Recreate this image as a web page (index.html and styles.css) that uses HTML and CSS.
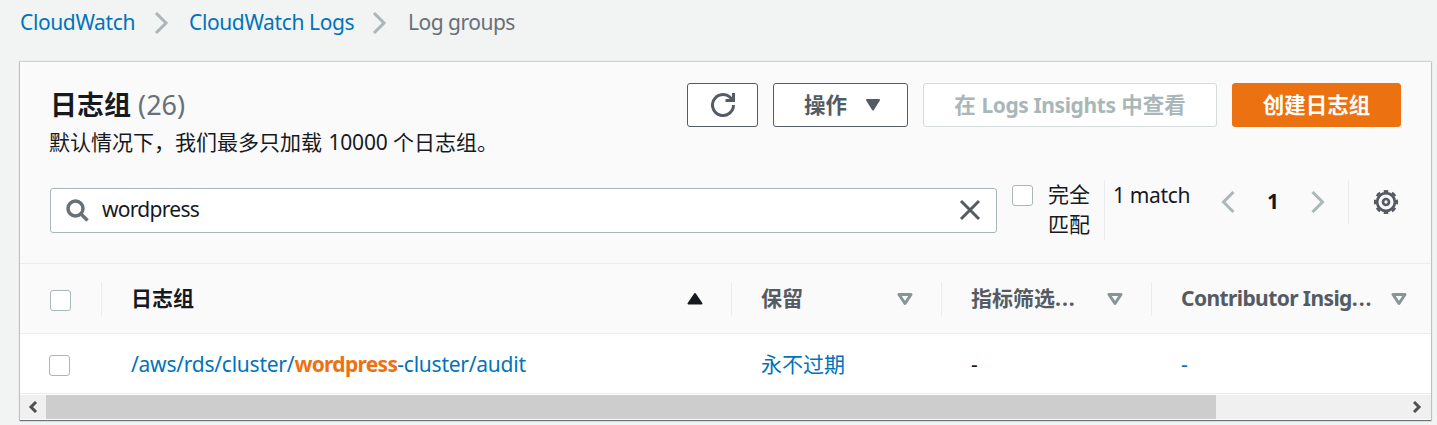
FILE: index.html
```html
<!DOCTYPE html>
<html lang="zh-CN">
<head>
<meta charset="utf-8">
<title>CloudWatch Logs</title>
<link rel="stylesheet" href="styles.css">
</head>
<body>
<nav class="crumbs">
  <a class="crumb crumb-root">CloudWatch</a>
  <svg class="crumb-sep" width="16" height="24" viewBox="0 0 16 24"><path d="M2 2l10 10L2 22"/></svg>
  <a class="crumb crumb-logs">CloudWatch Logs</a>
  <svg class="crumb-sep" width="16" height="24" viewBox="0 0 16 24"><path d="M2 2l10 10L2 22"/></svg>
  <span class="crumb current">Log groups</span>
</nav>
<main class="panel">
  <header class="panel-head">
    <div class="title-row">
      <div class="titles">
        <h1>日志组 <span class="count">(26)</span></h1>
        <p>默认情况下，我们最多只加载 <span class="num">10000</span> 个日志组。</p>
      </div>
      <div class="actions">
        <button class="btn refresh"><svg width="26" height="26" viewBox="0 0 26 26"><path d="M23.5 13A10.5 10.5 0 1 1 20 5.2L22.5 8"/><path d="M23.5 1v7.5h-8"/></svg></button>
        <button class="btn menu">操作<svg width="16" height="14" viewBox="0 0 16 14"><path d="M2 2h12L8 11.5z"/></svg></button>
        <button class="btn disabled">在 <span class="latin">Logs Insights</span> 中查看</button>
        <button class="btn primary">创建日志组</button>
      </div>
    </div>
    <div class="tools">
      <div class="search">
        <svg class="glass" width="24" height="24" viewBox="0 0 24 24"><circle cx="9.5" cy="9.5" r="7.5"/><path d="M14.8 14.8l6.7 6.7"/></svg>
        <span class="query">wordpress</span>
        <svg class="clear" width="22" height="22" viewBox="0 0 22 22"><path d="M2 2l18 18M20 2L2 20"/></svg>
      </div>
      <label class="exact"><span class="box"></span><span class="exact-text">完全匹配</span></label>
      <div class="matches">1 match</div>
      <div class="pager">
        <svg width="16" height="24" viewBox="0 0 16 24"><path d="M13.5 2l-10 10 10 10"/></svg>
        <b>1</b>
        <svg width="16" height="24" viewBox="0 0 16 24"><path d="M2.5 2l10 10-10 10"/></svg>
      </div>
      <div class="settings">
        <svg width="26" height="26" viewBox="0 0 26 26"><circle cx="13" cy="13" r="8.9"/><circle class="teeth" cx="13" cy="13" r="10.9" pathLength="80"/><circle cx="13" cy="13" r="3"/></svg>
      </div>
    </div>
  </header>
  <div class="row thead">
    <div class="cell check"><span class="box"></span></div>
    <div class="cell sorted"><span class="label">日志组</span><svg class="sort-up" width="18" height="14" viewBox="0 0 18 14"><path d="M2.5 11.5h13L9 2z"/></svg></div>
    <div class="cell"><span class="label">保留</span><svg class="sort" width="16" height="14" viewBox="0 0 16 14"><path d="M2 2.5h12L8 11.5z"/></svg></div>
    <div class="cell"><span class="label">指标筛选<span class="dots">...</span></span><svg class="sort" width="16" height="14" viewBox="0 0 16 14"><path d="M2 2.5h12L8 11.5z"/></svg></div>
    <div class="cell last"><span class="label contrib">Contributor Insig<span class="dots">...</span></span><svg class="sort" width="16" height="14" viewBox="0 0 16 14"><path d="M2 2.5h12L8 11.5z"/></svg></div>
  </div>
  <div class="row tbody">
    <div class="cell check"><span class="box"></span></div>
    <div class="cell"><a class="group">/aws/rds/cluster/<b>wordpress</b>-cluster/audit</a></div>
    <div class="cell"><a>永不过期</a></div>
    <div class="cell">-</div>
    <div class="cell last"><a>-</a></div>
  </div>
  <div class="scrollbar">
    <span class="arrow"><svg width="10" height="12" viewBox="0 0 10 12"><path d="M8 1L3 6l5 5"/></svg></span>
    <span class="thumb"></span>
    <span class="track"></span>
    <span class="arrow"><svg width="10" height="12" viewBox="0 0 10 12"><path d="M1 1l5 5-5 5"/></svg></span>
  </div>
</main>
</body>
</html>
```
FILE: styles.css
```css
* { box-sizing: border-box; }
body {
  margin: 0;
  height: 425px;
  overflow: hidden;
  background: #f2f3f3;
  color: #16191f;
  font: 21px/30px "Noto Sans", "Noto Sans CJK SC", sans-serif;
}
svg { display: block; flex: none; fill: none; }
a { color: #0073bb; }

.crumbs { display: flex; align-items: center; height: 62px; padding: 0 0 16px 20px; }
.crumb { margin-top: -2px; letter-spacing: -.38px; white-space: nowrap; }
.crumb-root { width: 134px; }
.crumb-logs { width: 183px; }
.crumb.current { margin-left: 1px; color: #687078; letter-spacing: -.5px; }
.crumb-sep { margin-right: 19px; stroke: #aab7b8; stroke-width: 3; }
.crumb-root, .crumb-logs { flex: none; }

.panel {
  width: 1411px;
  height: 358px;
  margin-left: 20px;
  background: #fff;
  box-shadow: 0 1px 1px rgba(0, 28, 36, .5), 0 0 1px 1px rgba(0, 28, 36, .15);
}
.panel-head { height: 202px; padding: 21px 30px 0; background: #fafafa; border-bottom: 1px solid #eaeded; }
.title-row { display: flex; justify-content: space-between; height: 97px; }
.titles { white-space: nowrap; }
h1 { margin: 3px 0 3px; font-size: 27px; line-height: 38px; font-weight: 700; }
.count { font-weight: 400; color: #687078; }
p { margin: 0 0 0 -1px; }
.num { margin-left: 1px; letter-spacing: -.2px; }
.actions { display: flex; gap: 15px; }
.btn {
  display: flex;
  align-items: center;
  justify-content: center;
  height: 44px;
  padding: 0 0 1px;
  border: 1px solid #545b64;
  border-radius: 3px;
  background: #fff;
  color: #545b64;
  font: inherit;
  font-size: 21.5px;
  font-weight: 700;
  white-space: pre;
}
.refresh { width: 71px; padding: 0; }
.refresh svg { stroke: #545b64; stroke-width: 3; }
.menu { width: 135px; gap: 18px; padding-left: 4px; }
.menu svg { margin-top: 1px; fill: #545b64; stroke: #545b64; stroke-width: 2; stroke-linejoin: round; }
.disabled { width: 294px; border-color: #d5dbdb; color: #aab7b8; }
.latin { font-size: 21px; letter-spacing: -.4px; }
.primary { width: 169px; border-color: #ec7211; background: #ec7211; color: #fff; }

.tools { display: flex; align-items: flex-start; }
.search {
  display: flex;
  align-items: center;
  width: 947px;
  height: 45px;
  margin-top: 8px;
  padding: 0 15px 2px;
  border: 1px solid #aab7b8;
  border-radius: 3px;
  background: #fff;
}
.glass { margin-top: 2px; stroke: #687078; stroke-width: 3.5; }
.query { flex: 1; margin: -1px 0 0 12px; letter-spacing: -.7px; }
.clear { stroke: #545b64; stroke-width: 3; }
.box { display: block; flex: none; width: 21px; height: 21px; border: 1.5px solid #aab7b8; border-radius: 3px; background: #fff; }
.exact { display: flex; margin-left: 15px; }
.exact .box { margin-top: 5px; }
.exact-text { width: 42px; margin: -1px 0 0 15px; }
.matches { width: 98px; height: 60px; margin-left: 14px; padding-left: 8px; border-left: 1px solid #eaeded; letter-spacing: -.35px; white-space: nowrap; }
.pager { display: flex; align-items: center; justify-content: space-between; width: 106px; height: 44px; margin-left: 18px; }
.pager svg { stroke: #aab7b8; stroke-width: 3; }
.pager b { margin-top: -2px; }
.settings { display: flex; align-items: center; justify-content: flex-end; width: 51px; height: 44px; margin-left: 22px; border-left: 1px solid #eaeded; }
.settings svg { stroke: #545b64; stroke-width: 2.7; }
.settings .teeth { stroke-width: 2.4; stroke-dasharray: 5.4 4.6; stroke-dashoffset: 2.7; }

.row { display: grid; grid-template-columns: 82px 630px 210px 210px 279px; }
.cell { display: flex; align-items: center; justify-content: space-between; padding: 0 28px 0 29px; white-space: nowrap; }
.thead { height: 70px; padding: 18px 0; border-bottom: 1px solid #eaeded; background: #fafafa; color: #545b64; font-weight: 700; }
.thead .cell { height: 34px; border-right: 1px solid #eaeded; }
.thead .sorted { padding-right: 27px; color: #16191f; }
.thead .last { padding-right: 24px; border: 0; }
.cell.check { padding: 0 0 0 30px; }
.label { margin-top: -2px; }
.dots { letter-spacing: 1px; }
.thead .box { margin-top: 2px; }
.sort { stroke: #879596; stroke-width: 3; stroke-linejoin: round; }
.sort-up { fill: #16191f; stroke: #16191f; stroke-width: 2; stroke-linejoin: round; }
.contrib { letter-spacing: -.6px; }
.tbody { height: 60px; border-bottom: 1px solid #eaeded; }
.tbody .box { margin: 3px 0 0 -1px; }
.group { letter-spacing: -.24px; }
.group b { color: #ec7211; letter-spacing: -.7px; }

.scrollbar { display: flex; height: 25px; margin-top: 1px; border-bottom: 1px solid #fafafa; background: #f0f0f0; }
.arrow { display: flex; align-items: center; justify-content: center; width: 26px; }
.arrow svg { stroke: #505050; stroke-width: 3; }
.thumb { width: 1170px; background: #cdcdcd; }
.track { flex: 1; }
```
